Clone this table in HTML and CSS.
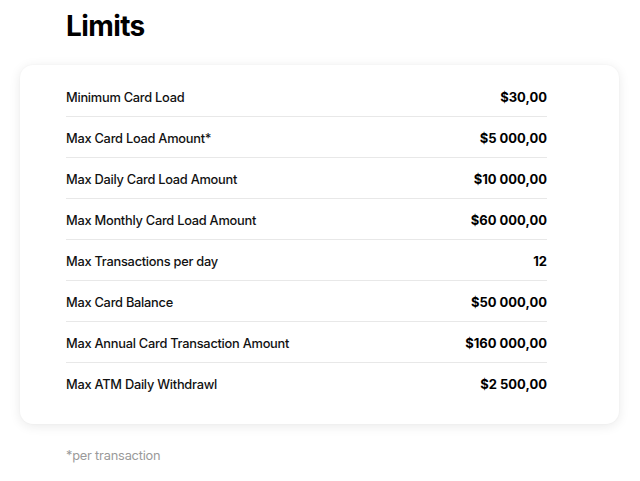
FILE: index.html
```html
<!DOCTYPE html>
<html>
<head>
<meta charset="utf-8">
<link rel="stylesheet" href="styles.css">
</head>
<body>
<main class="page">
  <h1 class="title">Limits</h1>
  <section class="card">
    <div class="row"><span class="label">Minimum Card Load</span><span class="value">$30,00</span></div>
    <div class="row"><span class="label">Max Card Load Amount*</span><span class="value">$5 000,00</span></div>
    <div class="row"><span class="label">Max Daily Card Load Amount</span><span class="value">$10 000,00</span></div>
    <div class="row"><span class="label">Max Monthly Card Load Amount</span><span class="value">$60 000,00</span></div>
    <div class="row"><span class="label">Max Transactions per day</span><span class="value">12</span></div>
    <div class="row"><span class="label">Max Card Balance</span><span class="value">$50 000,00</span></div>
    <div class="row"><span class="label">Max Annual Card Transaction Amount</span><span class="value">$160 000,00</span></div>
    <div class="row"><span class="label">Max ATM Daily Withdrawl</span><span class="value">$2 500,00</span></div>
  </section>
  <p class="note">*per transaction</p>
</main>
</body>
</html>
```
FILE: styles.css
```css
* { box-sizing: border-box; }
html, body { margin: 0; padding: 0; background: #fff; }
body {
  font-family: Inter, "Noto Sans", sans-serif;
  color: #111;
}
.page {
  width: 640px;
  padding: 0 21px 0 20px;
}
.title {
  margin: 0;
  padding: 8px 0 0 46px;
  height: 65px;
  font-size: 28px;
  font-weight: 700;
  letter-spacing: -0.6px;
  line-height: 37px;
  color: #000;
}
.card {
  width: 599px;
  background: #fff;
  border-radius: 13px;
  box-shadow: 0 2px 12px rgba(0,0,0,0.09), 0 0 2px rgba(0,0,0,0.04);
  padding: 11px 72px 21px 46px;
}
.row {
  display: flex;
  justify-content: space-between;
  align-items: center;
  height: 41px;
  padding-top: 2px;
  border-bottom: 1px solid #e8e8e8;
}
.row:last-child { border-bottom: none; height: 40px; }
.label {
  font-size: 12.8px;
  font-weight: 500;
  letter-spacing: -0.25px;
  color: #111;
}
.value {
  font-size: 13px;
  font-weight: 700;
  color: #000;
}
.note {
  margin: 24px 0 0 46px;
  font-size: 12.8px;
  letter-spacing: -0.2px;
  color: #9a9a9a;
}
```
